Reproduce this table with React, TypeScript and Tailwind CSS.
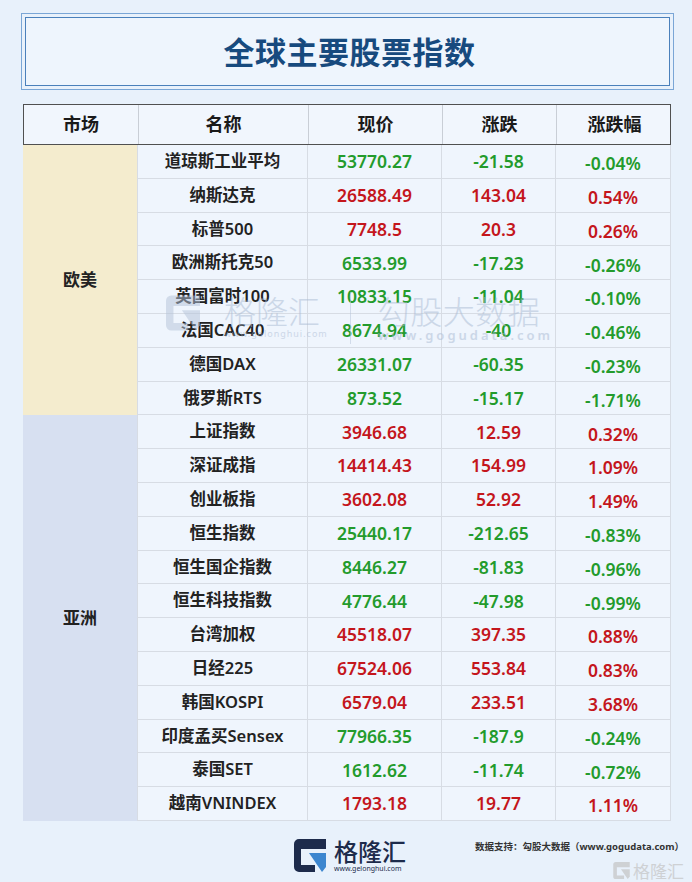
import React from 'react';

type Row = { name: string; price: string; change: string; pct: string; up: boolean };

const europe: Row[] = [
  { name: '道琼斯工业平均', price: '53770.27', change: '-21.58', pct: '-0.04%', up: false },
  { name: '纳斯达克', price: '26588.49', change: '143.04', pct: '0.54%', up: true },
  { name: '标普500', price: '7748.5', change: '20.3', pct: '0.26%', up: true },
  { name: '欧洲斯托克50', price: '6533.99', change: '-17.23', pct: '-0.26%', up: false },
  { name: '英国富时100', price: '10833.15', change: '-11.04', pct: '-0.10%', up: false },
  { name: '法国CAC40', price: '8674.94', change: '-40', pct: '-0.46%', up: false },
  { name: '德国DAX', price: '26331.07', change: '-60.35', pct: '-0.23%', up: false },
  { name: '俄罗斯RTS', price: '873.52', change: '-15.17', pct: '-1.71%', up: false },
];

const asia: Row[] = [
  { name: '上证指数', price: '3946.68', change: '12.59', pct: '0.32%', up: true },
  { name: '深证成指', price: '14414.43', change: '154.99', pct: '1.09%', up: true },
  { name: '创业板指', price: '3602.08', change: '52.92', pct: '1.49%', up: true },
  { name: '恒生指数', price: '25440.17', change: '-212.65', pct: '-0.83%', up: false },
  { name: '恒生国企指数', price: '8446.27', change: '-81.83', pct: '-0.96%', up: false },
  { name: '恒生科技指数', price: '4776.44', change: '-47.98', pct: '-0.99%', up: false },
  { name: '台湾加权', price: '45518.07', change: '397.35', pct: '0.88%', up: true },
  { name: '日经225', price: '67524.06', change: '553.84', pct: '0.83%', up: true },
  { name: '韩国KOSPI', price: '6579.04', change: '233.51', pct: '3.68%', up: true },
  { name: '印度孟买Sensex', price: '77966.35', change: '-187.9', pct: '-0.24%', up: false },
  { name: '泰国SET', price: '1612.62', change: '-11.74', pct: '-0.72%', up: false },
  { name: '越南VNINDEX', price: '1793.18', change: '19.77', pct: '1.11%', up: true },
];

const GLogo = ({ className, navy, blue }: { className?: string; navy: string; blue: string }) => (
  <svg viewBox="0 0 32 33" className={className}>
    <path d="M5 0 H32 V10 H7 V26 H21 V33 H5 A5 5 0 0 1 0 28 V5 A5 5 0 0 1 5 0 Z" fill={navy} />
    <path d="M15 14 H32 V28 L28 33 Z" fill={blue} />
  </svg>
);

const DataRow = ({ row }: { row: Row }) => {
  const color = row.up ? 'text-[#c4161c]' : 'text-[#239b2c]';
  return (
    <>
      <div className="flex items-center justify-center border-b border-r border-[#d7dce4] bg-[#eff5fd] text-[16.5px] font-semibold text-[#222]">
        {row.name}
      </div>
      <div className={`flex items-center justify-center border-b border-r border-[#d7dce4] bg-[#eff5fd] text-[17.5px] font-semibold ${color}`}>
        {row.price}
      </div>
      <div className={`flex items-center justify-center border-b border-r border-[#d7dce4] bg-[#eff5fd] text-[17.5px] font-semibold ${color}`}>
        {row.change}
      </div>
      <div className={`flex items-center justify-center border-b border-r border-[#d7dce4] bg-[#eff5fd] pt-1 text-[17.5px] font-semibold ${color}`}>
        {row.pct}
      </div>
    </>
  );
};

export default function App() {
  return (
    <div className="relative w-[692px] h-[882px] overflow-hidden bg-[#e8f1fb] font-['Noto_Sans','Noto_Sans_CJK_SC',sans-serif]">
      {/* title */}
      <div className="ml-[21px] mt-[13px] w-[653px] h-[77px] border border-[#7aa6d6] p-[3px]">
        <div className="flex h-full items-center justify-center border border-[#4a80bb] bg-[#eef5fd]">
          <h1 className="pl-[4px] font-['Noto_Sans_CJK_SC',sans-serif] text-[31px] font-bold tracking-[0.5px] text-[#174a7e]">
            全球主要股票指数
          </h1>
        </div>
      </div>

      {/* table */}
      <div className="ml-[23px] mt-[14px] w-[648px]">
        <div className="grid h-[41px] grid-cols-[115px_170px_134px_114px_115px] border border-[#505050] bg-[#f1f6fd] text-[18px] font-semibold text-[#1a1a1a]">
          <div className="flex items-center justify-center border-r border-[#c9ced6]">市场</div>
          <div className="flex items-center justify-center border-r border-[#c9ced6]">名称</div>
          <div className="flex items-center justify-center border-r border-[#c9ced6]">现价</div>
          <div className="flex items-center justify-center border-r border-[#c9ced6]">涨跌</div>
          <div className="flex items-center justify-center">涨跌幅</div>
        </div>
        <div className="grid grid-cols-[115px_170px_134px_114px_115px] grid-rows-[repeat(20,33.8px)]">
          <div className="row-span-8 flex items-center justify-center border-r border-[#d7dce4] bg-[#f4ecce] text-[17px] font-semibold text-[#222]">
            欧美
          </div>
          {europe.map((r) => (
            <DataRow key={r.name} row={r} />
          ))}
          <div className="row-span-12 flex items-center justify-center border-r border-[#d7dce4] bg-[#d7e0f1] text-[17px] font-semibold text-[#222]">
            亚洲
          </div>
          {asia.map((r) => (
            <DataRow key={r.name} row={r} />
          ))}
        </div>
      </div>

      {/* watermark */}
      <div className="pointer-events-none absolute left-[166px] top-[292px] flex items-start opacity-50">
        <GLogo className="mt-[3px] h-[36px] w-[34px]" navy="#b4c3d9" blue="#b4c3d9" />
        <div className="ml-[24px] flex flex-col items-start">
          <span className="font-['Noto_Sans_CJK_SC',sans-serif] text-[32px] leading-[36px] font-light text-[#a9bad3]">格隆汇</span>
          <span className="text-[9px] leading-[12px] tracking-[1px] text-[#a9bad3]">www.gelonghui.com</span>
        </div>
        <div className="ml-[22px] h-[52px] w-px bg-[#b4c3d9]" />
        <div className="ml-[27px] flex flex-col items-start">
          <span className="font-['Noto_Sans_CJK_SC',sans-serif] text-[32px] leading-[36px] font-light tracking-[0.5px] text-[#a9bad3]">勾股大数据</span>
          <span className="text-[13px] leading-[14px] font-semibold tracking-[3px] text-[#a9bad3]">www.gogudata.com</span>
        </div>
      </div>

      {/* footer */}
      <div className="relative mt-[17px] flex justify-center">
        <div className="flex items-center gap-[8px] pl-[8px]">
          <GLogo className="h-[33px] w-[32px]" navy="#1d2b4b" blue="#3c86cf" />
          <div className="flex flex-col">
            <span className="font-['Noto_Sans_CJK_SC',sans-serif] text-[24px] leading-[26px] font-medium text-[#1d2b4b]">格隆汇</span>
            <span className="text-[7px] leading-[9px] text-[#1d2b4b]">www.gelonghui.com</span>
          </div>
        </div>
        <div className="absolute right-[8px] top-[2px] font-['Noto_Sans','Noto_Sans_CJK_SC',sans-serif] text-[9.5px] font-bold text-[#333]">
          数据支持：勾股大数据（www.gogudata.com）
        </div>
        <div className="absolute right-[8px] top-[24px] flex items-center gap-[3px] opacity-70">
          <GLogo className="h-[17px] w-[17px]" navy="#c4c4c4" blue="#c4c4c4" />
          <span className="font-['Noto_Sans_CJK_SC',sans-serif] text-[17px] leading-[18px] text-[#c4c4c4]">格隆汇</span>
        </div>
      </div>
    </div>
  );
}
